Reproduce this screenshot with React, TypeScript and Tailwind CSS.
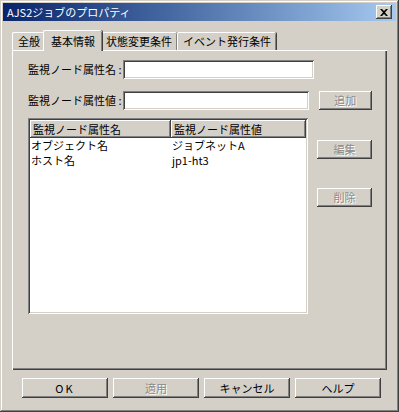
import React from "react";

const font = "font-['MS_UI_Gothic','Noto_Sans_CJK_JP',sans-serif]";

const raised =
  "bg-[#d4d0c8] shadow-[inset_-1px_-1px_#404040,inset_1px_1px_#ffffff,inset_-2px_-2px_#808080,inset_2px_2px_#d4d0c8]";
const sunken =
  "bg-white shadow-[inset_1px_1px_#808080,inset_-1px_-1px_#ffffff,inset_2px_2px_#404040,inset_-2px_-2px_#d4d0c8]";

function Button({ label, disabled, className = "" }: { label: string; disabled?: boolean; className?: string }) {
  return (
    <div className={`${raised} flex items-center justify-center text-[11px] leading-none ${className}`}>
      <span className={disabled ? "text-[#8a8a8a] [text-shadow:1px_1px_0_#ffffff]" : "text-black"}>{label}</span>
    </div>
  );
}

function Tab({ label, active }: { label: string; active?: boolean }) {
  return (
    <div
      className={`relative flex items-center text-[11px] leading-none whitespace-nowrap text-black border-l border-t border-white rounded-t-[2px] shadow-[inset_-1px_0_#808080,1px_0_#404040] ${
        active ? "h-[21px] -mx-[2px] px-[7px] z-10 bg-[#d4d0c8] -mb-[1px]" : "h-[18px] mt-[3px] px-[5px]"
      }`}
    >
      {label}
    </div>
  );
}

export default function App() {
  const rows = [
    ["オブジェクト名", "ジョブネットA"],
    ["ホスト名", "jp1-ht3"],
  ];

  return (
    <div
      className={`${font} w-[399px] h-[412px] bg-[#d4d0c8] p-[3px] flex flex-col shadow-[inset_-1px_-1px_#404040,inset_1px_1px_#d4d0c8,inset_-2px_-2px_#808080,inset_2px_2px_#ffffff]`}
    >
      <div className="h-[18px] flex items-center justify-between pl-[4px] pr-[4px] bg-gradient-to-r from-[#0a246a] to-[#a6caf0]">
        <span className="text-white text-[11px] leading-none">AJS2ジョブのプロパティ</span>
        <div className={`${raised} w-[16px] h-[14px] flex items-center justify-center`}>
          <svg width="8" height="7" viewBox="0 0 8 7">
            <path d="M0 0h2l2 2 2-2h2L5 3.5 8 7H6L4 5 2 7H0l3-3.5z" fill="#000" />
          </svg>
        </div>
      </div>

      <div className="flex items-end ml-[9px] mt-[8px] h-[21px]">
        <Tab label="全般" />
        <Tab label="基本情報" active />
        <Tab label="状態変更条件" />
        <Tab label="イベント発行条件" />
      </div>

      <div className="ml-[9px] w-[375px] h-[320px] border-t border-l border-white shadow-[inset_-1px_-1px_#404040,inset_-2px_-2px_#808080] px-[15px] pt-[9px]">
        <div className="flex items-center h-[19px]">
          <div className="w-[95px] shrink-0 whitespace-nowrap text-[11px] leading-none">監視ノード属性名 :</div>
          <div className={`${sunken} w-[191px] h-[19px]`} />
        </div>
        <div className="flex items-center h-[19px] mt-[12px]">
          <div className="w-[95px] shrink-0 whitespace-nowrap text-[11px] leading-none">監視ノード属性値 :</div>
          <div className={`${sunken} w-[191px] h-[19px]`} />
          <Button label="追加" disabled className="ml-[10px] w-[55px] h-[19px]" />
        </div>
        <div className="flex mt-[8px]">
          <div className={`${sunken} w-[287px] h-[196px] p-[2px]`}>
            <div className="flex h-[18px]">
              <div className={`${raised} w-[141px] flex items-center px-[3px] text-[11px] leading-none`}>監視ノード属性名</div>
              <div className={`${raised} flex-1 flex items-center px-[3px] text-[11px] leading-none`}>監視ノード属性値</div>
            </div>
            <div>
              {rows.map(([a, b]) => (
                <div key={a} className="flex h-[15px] items-center text-[11px] leading-none">
                  <div className="w-[141px] pl-[1px]">{a}</div>
                  <div className="pl-[1px]">{b}</div>
                </div>
              ))}
            </div>
          </div>
          <div className="flex flex-col ml-[9px]">
            <Button label="編集" disabled className="mt-[22px] w-[55px] h-[19px]" />
            <Button label="削除" disabled className="mt-[29px] w-[55px] h-[19px]" />
          </div>
        </div>
      </div>

      <div className="flex gap-[5px] ml-[19px] mt-[8px]">
        <Button label="OK" className="w-[86px] h-[20px] tracking-[2px]" />
        <Button label="適用" disabled className="w-[86px] h-[20px]" />
        <Button label="キャンセル" className="w-[86px] h-[20px]" />
        <Button label="ヘルプ" className="w-[86px] h-[20px]" />
      </div>
    </div>
  );
}
